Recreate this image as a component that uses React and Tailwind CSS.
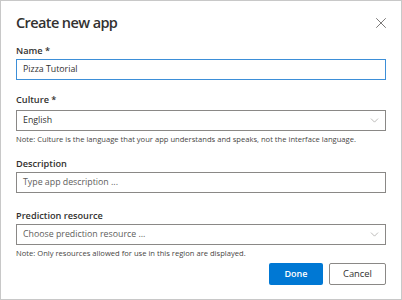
import { X, ChevronDown } from 'lucide-react'

const font = { fontFamily: '"Open Sans", "Noto Sans", sans-serif' }

const Label = ({ children, required }) => (
  <div className="text-[9.2px] leading-[14px] font-semibold text-[#323130]">
    {children}
    {required && <span> *</span>}
  </div>
)

const TextBox = ({ value, placeholder, focused }) => (
  <div
    className={`h-[21px] flex items-center px-[6px] border bg-white ${
      focused ? 'border-[#3d8fd8]' : 'border-[#8a8886]'
    }`}
  >
    <span className={`text-[8.8px] ${value ? 'text-[#323130]' : 'text-[#605e5c]'}`}>
      {value || placeholder}
    </span>
  </div>
)

const Select = ({ value, placeholder }) => (
  <div className="h-[21px] flex items-center justify-between pl-[6px] pr-[4px] border border-[#8a8886] bg-white">
    <span className={`text-[8.8px] ${value ? 'text-[#323130]' : 'text-[#605e5c]'}`}>
      {value || placeholder}
    </span>
    <ChevronDown className="w-[13px] h-[13px] text-[#a19f9d]" strokeWidth={1.3} />
  </div>
)

const Note = ({ children }) => (
  <div className="mt-[3px] text-[7.6px] leading-[11px] text-[#484644] whitespace-nowrap">{children}</div>
)

export default function App() {
  return (
    <div style={font} className="w-[402px] h-[300px] border border-[#c8c8c8] bg-white px-[15px] pt-[11px]">
      <div className="flex items-center justify-between h-[20px]">
        <h1 className="text-[14.5px] leading-[20px] font-semibold tracking-[-0.6px] text-[#323130] mt-[1px]">
          Create new app
        </h1>
        <X className="w-[18px] h-[18px] text-[#605e5c] -mr-[4px] mt-[1px]" strokeWidth={1.1} />
      </div>

      <div className="mt-[12px]">
        <Label required>Name</Label>
        <div className="mt-[1px]">
          <TextBox value="Pizza Tutorial" focused />
        </div>
      </div>

      <div className="mt-[13px]">
        <Label required>Culture</Label>
        <div className="mt-[3px]">
          <Select value="English" />
        </div>
        <Note>Note: Culture is the language that your app understands and speaks, not the interface language.</Note>
      </div>

      <div className="mt-[12px]">
        <Label>Description</Label>
        <div className="mt-[1px]">
          <TextBox placeholder="Type app description ..." />
        </div>
      </div>

      <div className="mt-[16px]">
        <Label>Prediction resource</Label>
        <div className="mt-[1px]">
          <Select placeholder="Choose prediction resource ..." />
        </div>
        <Note>Note: Only resources allowed for use in this region are displayed.</Note>
      </div>

      <div className="mt-[4px] flex justify-end gap-[6px]">
        <button className="h-[22px] w-[54px] bg-[#0078d4] text-white text-[9px] font-semibold rounded-[2px]">
          Done
        </button>
        <button className="h-[22px] w-[57px] bg-white border border-[#8a8886] text-[#323130] text-[9.4px] rounded-[2px]">
          Cancel
        </button>
      </div>
    </div>
  )
}
